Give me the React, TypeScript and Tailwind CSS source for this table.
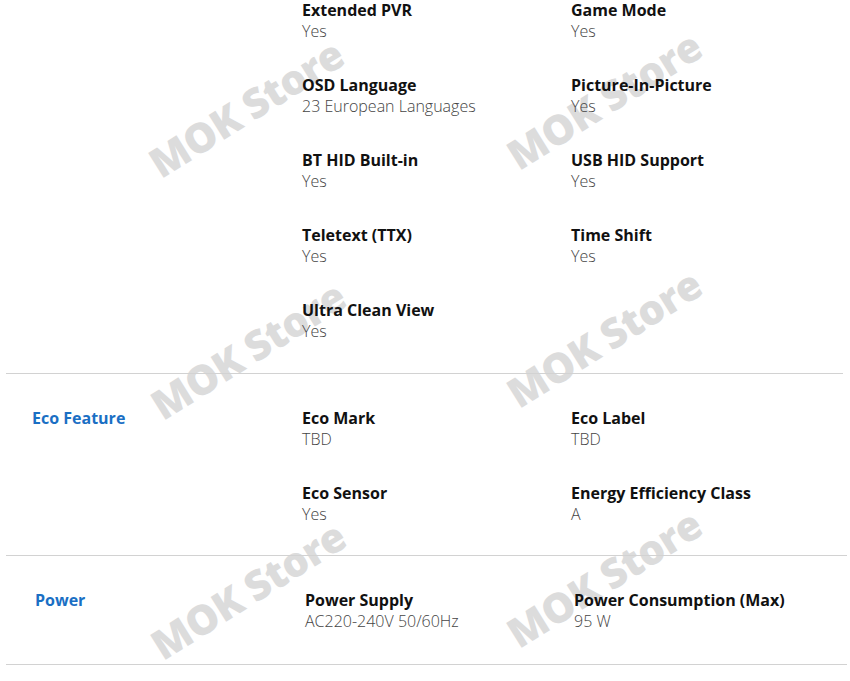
import React from 'react';

type Spec = { title: string; value: string };

interface SectionProps {
  label?: string;
  items: Spec[];
  shift?: boolean;
  className?: string;
}

const features: Spec[] = [
  { title: 'Extended PVR', value: 'Yes' },
  { title: 'Game Mode', value: 'Yes' },
  { title: 'OSD Language', value: '23 European Languages' },
  { title: 'Picture-In-Picture', value: 'Yes' },
  { title: 'BT HID Built-in', value: 'Yes' },
  { title: 'USB HID Support', value: 'Yes' },
  { title: 'Teletext (TTX)', value: 'Yes' },
  { title: 'Time Shift', value: 'Yes' },
  { title: 'Ultra Clean View', value: 'Yes' },
];

const eco: Spec[] = [
  { title: 'Eco Mark', value: 'TBD' },
  { title: 'Eco Label', value: 'TBD' },
  { title: 'Eco Sensor', value: 'Yes' },
  { title: 'Energy Efficiency Class', value: 'A' },
];

const power: Spec[] = [
  { title: 'Power Supply', value: 'AC220-240V 50/60Hz' },
  { title: 'Power Consumption (Max)', value: '95 W' },
];

// watermark centres, measured off the product page capture
const marks = [
  { x: 246, y: 108 },
  { x: 604, y: 100 },
  { x: 248, y: 350 },
  { x: 604, y: 338 },
  { x: 248, y: 590 },
  { x: 604, y: 578 },
];

const SpecSection: React.FC<SectionProps> = ({ label, items, shift, className }) => (
  <div className={`flex ${className || ''}`}>
    <div className={`w-[296px] shrink-0 ${shift ? 'pl-[29px]' : 'pl-[26px]'}`}>
      {label && <h3 className="text-[16px] leading-[21px] font-bold text-[#1a6fc4]">{label}</h3>}
    </div>
    <div className={`grid grid-cols-[269px_1fr] gap-y-[33px] ${shift ? 'pl-[3px]' : ''}`}>
      {items.map((item, i) => (
        <div key={`spec-${i}`}>
          <div className="text-[16px] leading-[21px] font-bold text-[#111]">{item.title}</div>
          <div className="text-[16px] leading-[21px] font-light text-[#444]">{item.value}</div>
        </div>
      ))}
    </div>
  </div>
);

export default function App() {
  return (
    <div className="relative w-[850px] h-[681px] overflow-hidden bg-white font-['Open_Sans',sans-serif]">
      {marks.map((m, i) => (
        <div
          key={`mark-${i}`}
          className="pointer-events-none absolute whitespace-nowrap text-[41px] leading-none font-extrabold tracking-[-0.5px] text-[#dcdcdc]"
          style={{ left: m.x, top: m.y, transform: 'translate(-50%, -50%) rotate(-32deg)' }}
        >
          MOK Store
        </div>
      ))}

      <div className="relative pl-[6px] pr-[3px]">
        <SpecSection items={features} className="pb-[31px] border-b border-[#d2d2d2] mr-[4px]" />
        <SpecSection label="Eco Feature" items={eco} className="pt-[34px] pb-[30px] border-b border-[#d2d2d2]" />
        <SpecSection label="Power" items={power} shift className="pt-[34px] pb-[32px] border-b border-[#d2d2d2]" />
      </div>
    </div>
  );
}
